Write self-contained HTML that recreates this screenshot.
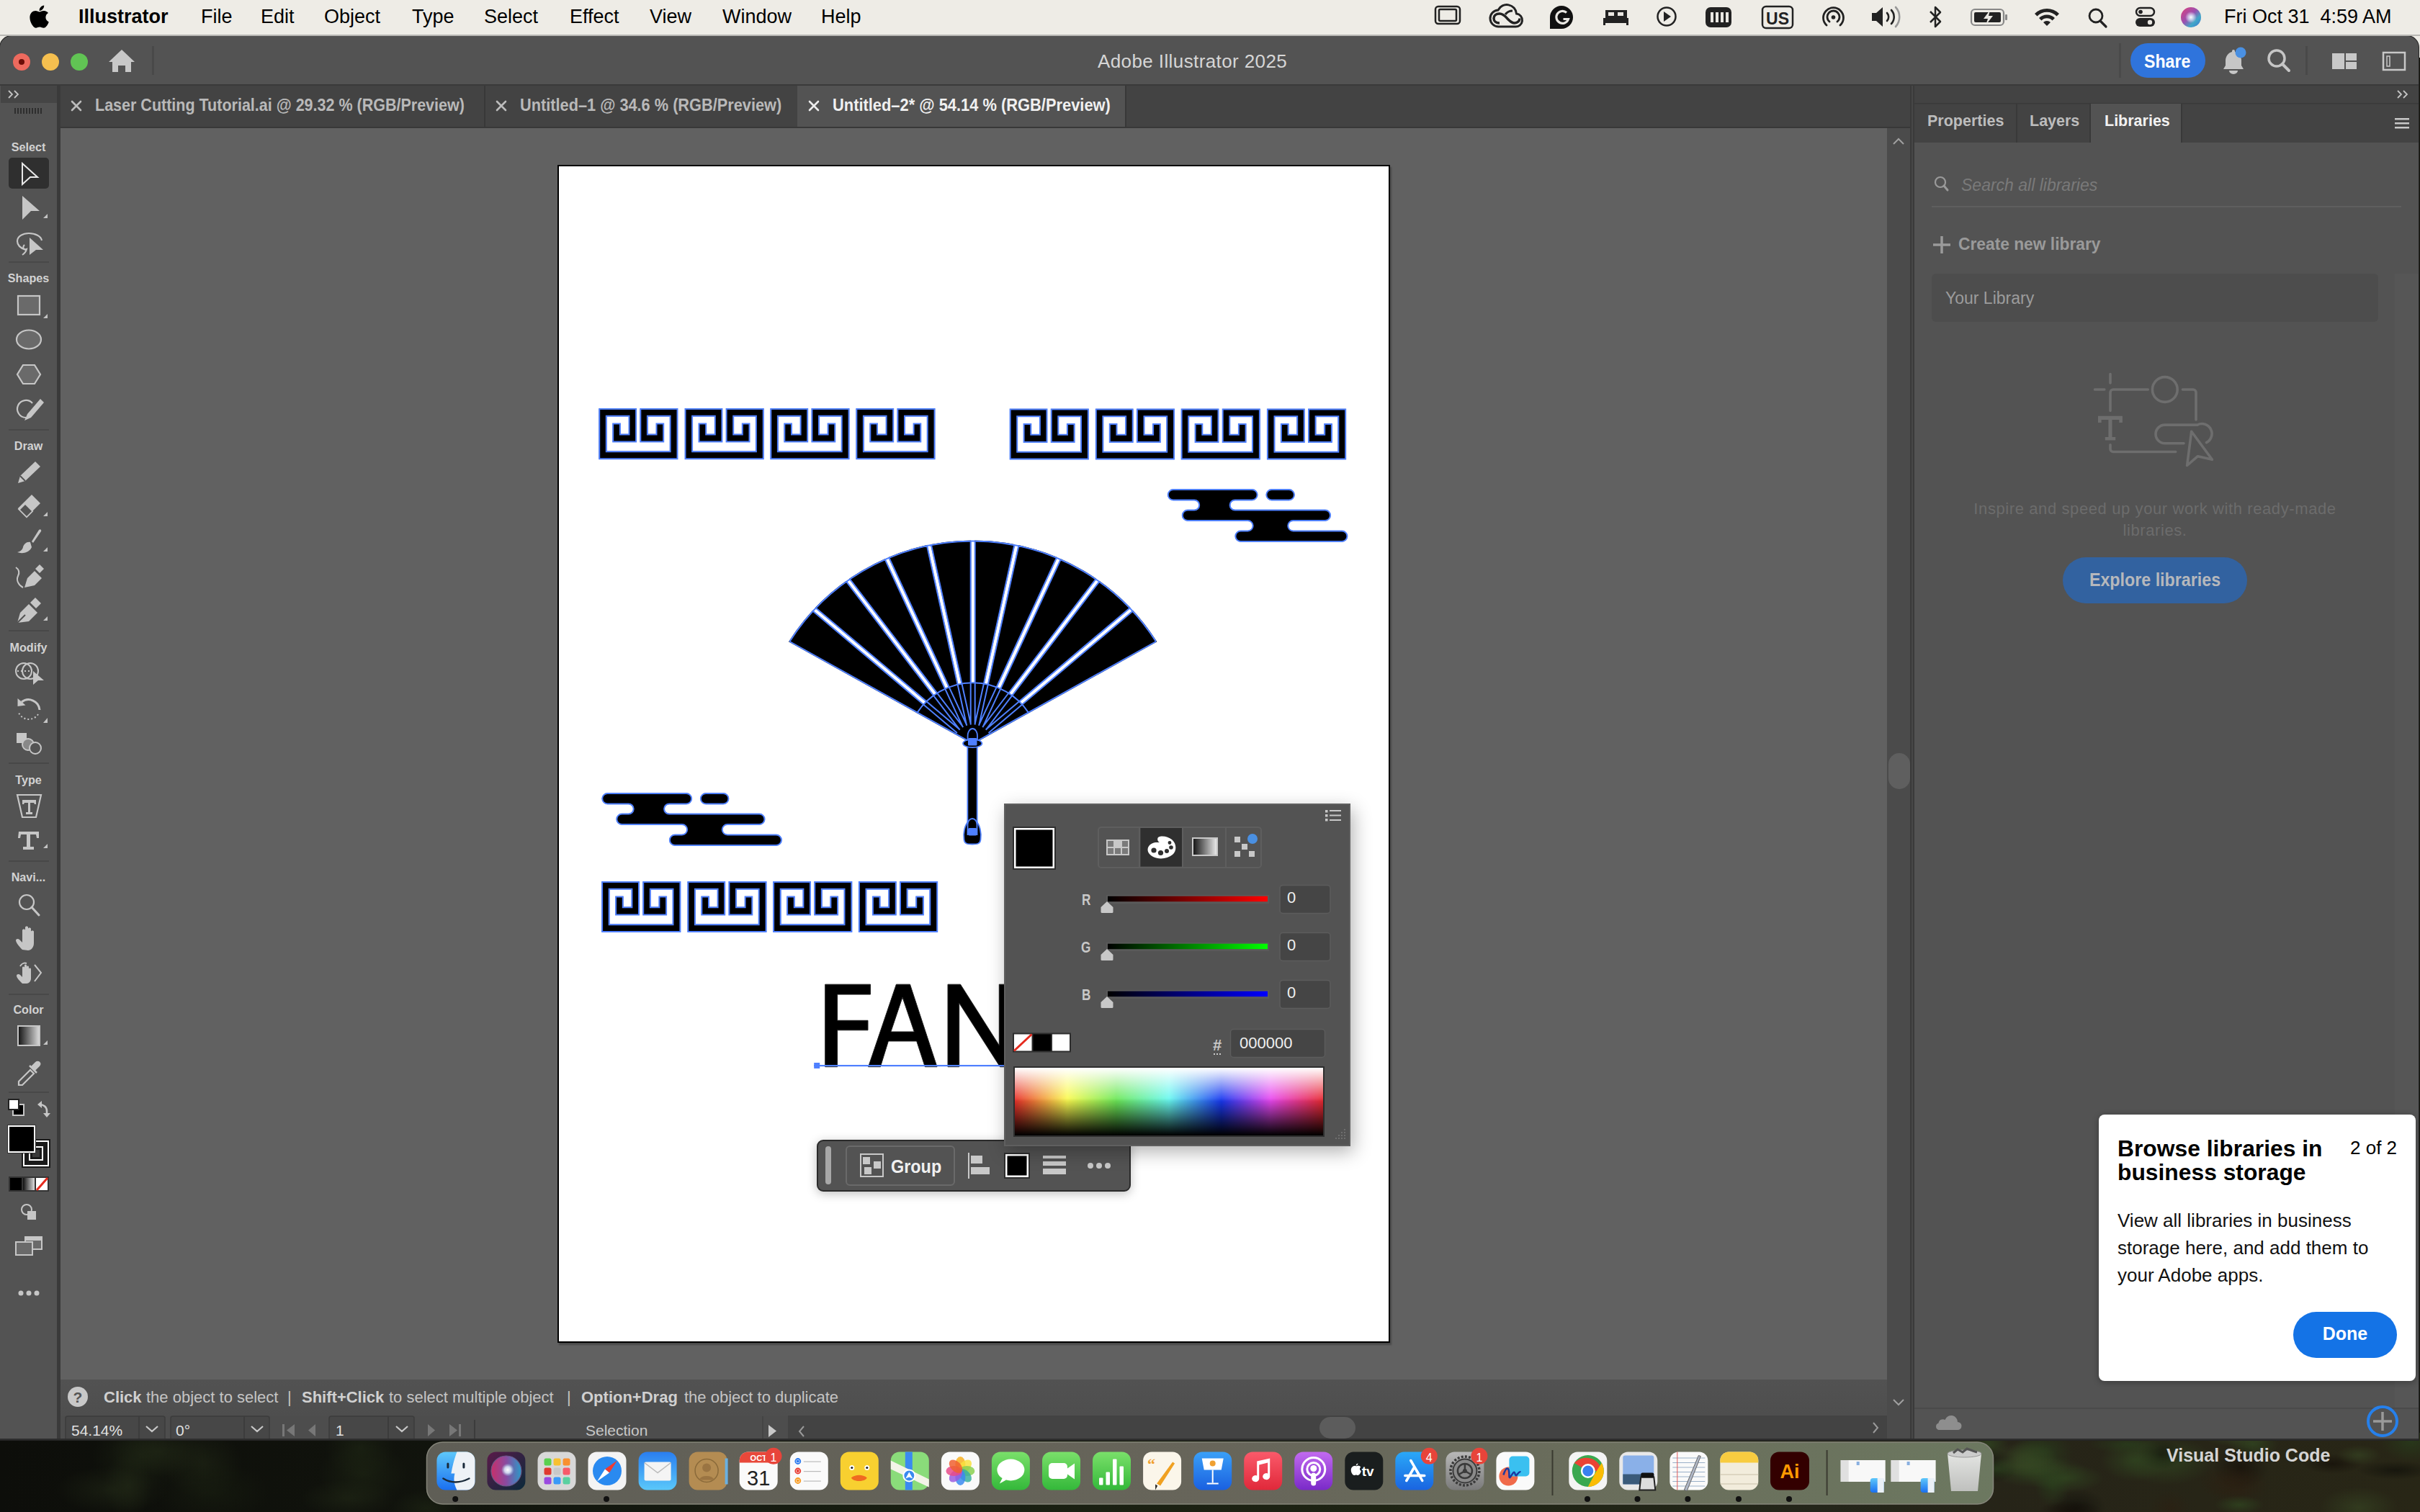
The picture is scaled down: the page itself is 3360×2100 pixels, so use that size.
<!DOCTYPE html>
<html><head><meta charset="utf-8">
<style>
*{margin:0;padding:0;box-sizing:border-box}
html,body{width:3360px;height:2100px;overflow:hidden}
body{position:relative;font-family:"Liberation Sans",sans-serif;background:#15160f}
.a{position:absolute}
.t{position:absolute;white-space:nowrap;line-height:1}
svg{position:absolute;overflow:visible}
#wall{left:0;top:1990px;width:3360px;height:110px;background:radial-gradient(ellipse 54px 13px at 2954px 16px,rgba(40,62,28,.7),transparent),radial-gradient(ellipse 34px 13px at 3109px 100px,rgba(48,70,32,.75),transparent),radial-gradient(ellipse 62px 14px at 2814px 46px,rgba(56,72,36,.6),transparent),radial-gradient(ellipse 51px 13px at 3109px 6px,rgba(56,72,36,.6),transparent),radial-gradient(ellipse 31px 14px at 3275px 31px,rgba(56,72,36,.6),transparent),radial-gradient(ellipse 53px 20px at 2868px 63px,rgba(48,70,32,.75),transparent),radial-gradient(ellipse 47px 24px at 3098px 68px,rgba(44,32,18,.65),transparent),radial-gradient(ellipse 38px 30px at 3111px 49px,rgba(20,14,8,.7),transparent),radial-gradient(ellipse 47px 19px at 2809px 33px,rgba(56,72,36,.6),transparent),radial-gradient(ellipse 43px 29px at 3348px 12px,rgba(40,62,28,.7),transparent),radial-gradient(ellipse 28px 24px at 3013px 105px,rgba(44,32,18,.65),transparent),radial-gradient(ellipse 47px 30px at 2964px 38px,rgba(48,70,32,.75),transparent),radial-gradient(ellipse 54px 13px at 3326px 52px,rgba(12,12,8,.6),transparent),radial-gradient(ellipse 45px 28px at 3106px 74px,rgba(44,32,18,.65),transparent),radial-gradient(ellipse 32px 14px at 2773px 50px,rgba(40,62,28,.7),transparent),radial-gradient(ellipse 42px 32px at 2837px 27px,rgba(40,62,28,.7),transparent),radial-gradient(ellipse 31px 21px at 3000px 30px,rgba(12,12,8,.6),transparent),radial-gradient(ellipse 64px 34px at 3009px 39px,rgba(48,70,32,.75),transparent),radial-gradient(ellipse 25px 31px at 2850px 72px,rgba(40,62,28,.7),transparent),radial-gradient(ellipse 41px 25px at 2762px 46px,rgba(12,12,8,.6),transparent),radial-gradient(ellipse 54px 29px at 3275px 104px,rgba(56,72,36,.6),transparent),radial-gradient(ellipse 42px 14px at 3238px 43px,rgba(20,14,8,.7),transparent),radial-gradient(ellipse 44px 14px at 2874px 108px,rgba(20,14,8,.7),transparent),radial-gradient(ellipse 29px 20px at 2760px 16px,rgba(48,70,32,.75),transparent),radial-gradient(ellipse 36px 19px at 3128px 16px,rgba(48,70,32,.75),transparent),radial-gradient(ellipse 69px 23px at 2829px 53px,rgba(48,70,32,.75),transparent),radial-gradient(ellipse 36px 31px at 2821px 37px,rgba(48,70,32,.75),transparent),radial-gradient(ellipse 41px 27px at 2883px 104px,rgba(12,12,8,.6),transparent),radial-gradient(ellipse 34px 45px at 178px 74px,rgba(36,44,24,.5),transparent),radial-gradient(ellipse 68px 35px at 220px 26px,rgba(36,44,24,.5),transparent),radial-gradient(ellipse 70px 49px at 197px 32px,rgba(30,38,20,.6),transparent),radial-gradient(ellipse 66px 26px at 483px 91px,rgba(36,44,24,.5),transparent),radial-gradient(ellipse 79px 43px at 295px 83px,rgba(24,30,16,.6),transparent),radial-gradient(ellipse 77px 33px at 155px 79px,rgba(36,44,24,.5),transparent),radial-gradient(ellipse 48px 26px at 592px 105px,rgba(30,38,20,.6),transparent),radial-gradient(ellipse 54px 49px at 282px 43px,rgba(36,44,24,.5),transparent),radial-gradient(ellipse 62px 43px at 504px 57px,rgba(30,38,20,.6),transparent),radial-gradient(ellipse 49px 41px at 500px 21px,rgba(30,38,20,.6),transparent),linear-gradient(90deg,#0d0e0a 0%,#10120c 15%,#151a10 30%,#1a2012 45%,#1f2414 60%,#24261a 75%,#262418 82%,#282616 100%)}
#menubar{left:0;top:0;width:3360px;height:80px;background:#EEECE6}
.mi{font-size:27px;color:#000;top:12px}
#win{left:0;top:50px;width:3358px;height:1950px;background:#535353;border-radius:16px 16px 0 0;box-shadow:0 0 0 1px #242424}
.tab{top:118px;height:59px;background:#434343;border-right:2px solid #393939}
.tabt{font-size:24px;font-weight:bold;color:#b9b9b9;top:137px}
.lbl{font-size:21px;font-weight:bold;color:#d2d2d2;left:0;width:79px;text-align:center}
.sep{left:12px;width:56px;height:2px;background:#484848}
</style></head>
<body>
<div id="wall" class="a"></div>
<div id="menubar" class="a"></div>
<div id="win" class="a"></div>

<!-- MENUBAR CONTENT -->
<div class="a" style="left:0;top:48px;width:3360px;height:2px;background:#b9b8b4"></div>
<svg style="left:0;top:0" width="80" height="50"><path fill="#000" transform="translate(41.1 5.2) scale(0.0701)" d="M318.7 268.7c-.2-36.7 16.4-64.4 50-84.8-18.8-26.9-47.2-41.7-84.7-44.6-35.5-2.8-74.3 20.7-88.5 20.7-15 0-49.4-19.7-76.4-19.7C63.3 141.2 4 184.8 4 273.5q0 39.3 14.4 81.2c12.8 36.7 59 126.7 107.2 125.2 25.2-.6 43-17.9 75.8-17.9 31.8 0 48.3 17.9 76.4 17.9 48.6-.7 90.4-82.5 102.6-119.3-65.2-30.7-61.7-90-61.7-91.9zm-56.6-164.2c27.3-32.4 24.8-61.9 24-72.5-24.1 1.4-52 16.4-67.9 34.9-17.5 19.8-27.8 44.3-25.6 71.9 26.1 2 49.9-11.4 69.5-34.3z"/></svg>
<div class="t mi" style="left:109px;top:10px;font-weight:bold">Illustrator</div>
<div class="t mi" style="left:279px;top:10px">File</div>
<div class="t mi" style="left:362px;top:10px">Edit</div>
<div class="t mi" style="left:450px;top:10px">Object</div>
<div class="t mi" style="left:572px;top:10px">Type</div>
<div class="t mi" style="left:672px;top:10px">Select</div>
<div class="t mi" style="left:791px;top:10px">Effect</div>
<div class="t mi" style="left:902px;top:10px">View</div>
<div class="t mi" style="left:1003px;top:10px">Window</div>
<div class="t mi" style="left:1140px;top:10px">Help</div>
<svg style="left:0;top:0" width="3360" height="50">
 <g fill="none" stroke="#222" stroke-width="2.5">
  <rect x="1993" y="9" width="34" height="24" rx="4"/><rect x="1998" y="13" width="24" height="16" rx="1.5"/>
 </g>
 <path d="M2081 37a11.5 11.5 0 0 1-1-23a13.5 13.5 0 0 1 25.5 5a9 9 0 0 1-2 18z" fill="none" stroke="#222" stroke-width="3"/>
 <path d="M2082 32c-5 0-8-3-8-6.5s3-6.5 8-6.5c6 0 9 5 12 8s5 5 9 5c4 0 7-3 7-6.5" fill="none" stroke="#222" stroke-width="3.5"/>
 <path d="M2090 20c3-4 6-5 10-5" fill="none" stroke="#222" stroke-width="3"/>
 <path d="M2168 8a16 16 0 1 1 0 32h-16v-16a16 16 0 0 1 16-16z" fill="#111"/>
 <path d="M2175 17.5a8.5 8.5 0 1 0 2.5 9h-7" fill="none" stroke="#e9e7e2" stroke-width="3.2"/>
 <path d="M2226 25h35v10h-3v-3h-29v3h-3z M2229 14h30v11h-30z" fill="#222"/>
 <rect x="2233" y="17" width="8" height="5" fill="#e9e7e2"/><rect x="2246" y="17" width="8" height="5" fill="#e9e7e2"/>
 <circle cx="2314" cy="23" r="12.5" fill="none" stroke="#222" stroke-width="2.5"/><path d="M2310 16l10 7-10 7z" fill="#222"/>
 <rect x="2368" y="10" width="36" height="28" rx="7" fill="#222"/>
 <g fill="#e9e7e2"><rect x="2375" y="17" width="4" height="14"/><rect x="2382" y="17" width="4" height="14"/><rect x="2389" y="17" width="4" height="14"/><rect x="2396" y="17" width="4" height="14"/></g>
 <rect x="2447" y="9" width="42" height="30" rx="5" fill="none" stroke="#222" stroke-width="2.5"/>
 <text x="2468" y="33.5" font-family="Liberation Sans" font-weight="bold" font-size="23" text-anchor="middle" fill="#222">US</text>
 <g fill="none" stroke="#222" stroke-width="2.8" stroke-linecap="round">
  <path d="M2536 35a14 14 0 1 1 19 0"/><path d="M2540 30a8.5 8.5 0 1 1 11 0"/>
 </g><circle cx="2545.5" cy="24" r="2.8" fill="#222"/>
 <path d="M2599 18h6l9-8v27l-9-8h-6z" fill="#222"/>
 <g fill="none" stroke-width="2.6" stroke-linecap="round"><path d="M2620 18a8 8 0 0 1 0 11" stroke="#222"/><path d="M2626 14a14 14 0 0 1 0 19" stroke="#222"/><path d="M2632 10a20 20 0 0 1 0 27" stroke="#999"/></g>
 <path d="M2680 16l14 14-7 7V10l7 7-14 14" fill="none" stroke="#222" stroke-width="2.5" stroke-linejoin="round"/>
 <rect x="2737" y="13" width="45" height="22" rx="5" fill="none" stroke="#888" stroke-width="2.2"/>
 <rect x="2741" y="17" width="37" height="14" rx="2" fill="#222"/><rect x="2784" y="20" width="3" height="8" rx="1" fill="#888"/>
 <path d="M2763 14l-9 12h6l-3 9 10-13h-6z" fill="#e9e7e2"/>
 <g fill="#222"><path d="M2825 19a24 24 0 0 1 34 0l-3.5 3.5a19 19 0 0 0-27 0z"/><path d="M2831 25a15.5 15.5 0 0 1 22 0l-3.5 3.5a10.5 10.5 0 0 0-15 0z"/><path d="M2837 31a7 7 0 0 1 10 0l-5 5z"/></g>
 <circle cx="2910" cy="22" r="9" fill="none" stroke="#222" stroke-width="2.8"/><path d="M2916 29l8 8" stroke="#222" stroke-width="3.2" stroke-linecap="round"/>
 <rect x="2966" y="11" width="25" height="11" rx="5.5" fill="none" stroke="#222" stroke-width="2.5"/><circle cx="2972" cy="16.5" r="2.8" fill="#222"/>
 <rect x="2965" y="25" width="27" height="12" rx="6" fill="#222"/><circle cx="2985" cy="31" r="3.2" fill="#e9e7e2"/>
 <defs><linearGradient id="siriL" x1="0" y1="0" x2="1" y2="1"><stop offset="0" stop-color="#e0407a"/><stop offset=".45" stop-color="#9a50b0"/><stop offset=".7" stop-color="#40a8c8"/><stop offset="1" stop-color="#3a70d0"/></linearGradient><radialGradient id="siriC" cx="50%" cy="50%" r="50%"><stop offset="0" stop-color="#fff"/><stop offset=".4" stop-color="#e8f8ff" stop-opacity=".7"/><stop offset="1" stop-color="#fff" stop-opacity="0"/></radialGradient></defs>
 <circle cx="3042" cy="24" r="14" fill="url(#siriL)"/><circle cx="3042" cy="24" r="8" fill="url(#siriC)"/>
</svg>
<div class="t mi" style="left:3088px;top:10px">Fri Oct 31&nbsp; 4:59 AM</div>

<!-- title bar -->
<div class="a" style="left:0;top:117px;width:3358px;height:2px;background:#3a3a3a"></div>
<!-- left column header and toolbar -->
<div class="a" style="left:1px;top:119px;width:78px;height:24px;background:#454545"></div>
<div class="a" style="left:79px;top:119px;width:5px;height:1879px;background:#3a3a3a"></div>
<!-- tabs row -->
<div class="a" style="left:84px;top:119px;width:2568px;height:58px;background:#434343"></div>
<!-- canvas -->
<div class="a" style="left:84px;top:177px;width:2536px;height:1739px;background:#616161"></div>
<div class="a" style="left:84px;top:176px;width:2568px;height:2px;background:#383838"></div>
<!-- v scrollbar -->
<div class="a" style="left:2620px;top:178px;width:32px;height:1820px;background:#4b4b4b"></div>
<div class="a" style="left:2622px;top:1046px;width:30px;height:50px;border-radius:15px;background:#5f5f5f"></div>
<div class="a" style="left:2652px;top:119px;width:6px;height:1879px;background:#3a3a3a"></div><div class="a" style="left:2654px;top:119px;width:2px;height:1879px;background:#474747"></div>
<!-- status rows -->
<div class="a" style="left:84px;top:1916px;width:2536px;height:50px;background:linear-gradient(#525252,#4e4e4e)"></div>
<div class="a" style="left:84px;top:1966px;width:1010px;height:32px;background:#4d4d4d"></div><div class="a" style="left:1094px;top:1966px;width:1526px;height:32px;background:#434343"></div><div class="a" style="left:0;top:1998px;width:3358px;height:2px;background:#2e2e2e"></div>
<div class="a" style="left:1832px;top:1968px;width:50px;height:30px;border-radius:15px;background:#5c5c5c"></div>
<!-- right panel -->
<div class="a" style="left:2658px;top:119px;width:700px;height:24px;background:#434343"></div>
<div class="a" style="left:2658px;top:143px;width:700px;height:55px;background:#434343"></div>
<div class="a" style="left:2658px;top:1955px;width:700px;height:2px;background:#4a4a4a"></div>

<!-- TITLEBAR CONTENT -->
<svg style="left:0;top:50px" width="3358" height="68">
 <circle cx="30" cy="36" r="12" fill="#ED6A5E"/><circle cx="30" cy="36" r="4" fill="#6b0d07"/>
 <circle cx="70" cy="36" r="12" fill="#F5BF4F"/>
 <circle cx="110" cy="36" r="12" fill="#61C454"/>
 <path d="M151 36L169 19L187 36H182V50H174V41H164V50H156V36Z" fill="#c8c8c8"/>
 <rect x="211" y="14" width="3" height="40" fill="#494949"/>
 <rect x="2942" y="10" width="3" height="48" fill="#4a4a4a"/>
 <rect x="2958" y="10" width="104" height="48" rx="24" fill="#2F74DC"/>
 <g fill="#c6c6c6">
  <path d="M3099 21a2 2 0 0 1 4 0v1c6 1.5 9 7 9 12v7l3 5h-28l3-5v-7c0-5 3-10.5 9-12z"/>
  <path d="M3095 48h12a6 5 0 0 1-12 0z"/>
 </g>
 <circle cx="3111" cy="23" r="7.5" fill="#4a90e2"/>
 <circle cx="3161" cy="31" r="11" fill="none" stroke="#c6c6c6" stroke-width="3.5"/>
 <path d="M3169 39l9 9" stroke="#c6c6c6" stroke-width="4" stroke-linecap="round"/>
 <rect x="3201" y="14" width="3" height="40" fill="#494949"/>
 <rect x="3238" y="24" width="17" height="22" fill="#c8c8c8"/><rect x="3257" y="24" width="15" height="10" fill="#c8c8c8"/><rect x="3257" y="36" width="15" height="10" fill="#c8c8c8"/>
 <rect x="3309" y="23" width="30" height="24" fill="none" stroke="#c8c8c8" stroke-width="2.5"/>
 <rect x="3314" y="28" width="4" height="14" fill="none" stroke="#c8c8c8" stroke-width="1.5"/>
</svg>
<div class="t" style="left:1524px;top:72px;font-size:26px;letter-spacing:.4px;color:#d6d6d6">Adobe Illustrator 2025</div>
<div class="t" style="left:2977px;top:72px;font-size:26px;font-weight:bold;color:#fff;transform:scaleX(.89);transform-origin:left">Share</div>

<!-- TABS -->
<div class="a" style="left:672px;top:119px;width:2px;height:57px;background:#383838"></div>
<div class="a" style="left:1107px;top:119px;width:455px;height:57px;background:#535353"></div>
<div class="a" style="left:1562px;top:119px;width:2px;height:57px;background:#383838"></div>
<svg style="left:0;top:118px" width="1600" height="60">
 <g stroke-width="2.6" stroke-linecap="round">
  <path d="M100 23l12 12M112 23l-12 12" stroke="#bcbcbc"/>
  <path d="M690 23l12 12M702 23l-12 12" stroke="#bcbcbc"/>
  <path d="M1124 23l12 12M1136 23l-12 12" stroke="#ececec"/>
 </g>
</svg>
<div class="t tabt" style="left:132px;top:134px;transform:scaleX(.896);transform-origin:left">Laser Cutting Tutorial.ai @ 29.32 % (RGB/Preview)</div>
<div class="t tabt" style="left:722px;top:134px;transform:scaleX(.906);transform-origin:left">Untitled&#8211;1 @ 34.6 % (RGB/Preview)</div>
<div class="t tabt" style="left:1156px;top:134px;color:#f0f0f0;transform:scaleX(.911);transform-origin:left">Untitled&#8211;2* @ 54.14 % (RGB/Preview)</div>

<!-- RIGHT PANEL HEADER -->
<svg style="left:2658px;top:118px" width="700" height="80">
 <path d="M671 8l5 5-5 5M679 8l5 5-5 5" fill="none" stroke="#c4c4c4" stroke-width="1.8"/>
 <rect x="0" y="25" width="700" height="1.5" fill="#3a3a3a"/>
 <rect x="141" y="26" width="2" height="54" fill="#393939"/>
 <rect x="245" y="26" width="125" height="54" fill="#535353"/>
 <rect x="243" y="26" width="2" height="54" fill="#393939"/>
 <rect x="370" y="26" width="2" height="54" fill="#393939"/>
 <g fill="#c8c8c8"><rect x="667" y="46" width="20" height="2.5"/><rect x="667" y="52" width="20" height="2.5"/><rect x="667" y="58" width="20" height="2.5"/></g>
</svg>
<div class="t" style="left:2676px;top:158px;font-size:21.5px;font-weight:bold;color:#bdbdbd">Properties</div>
<div class="t" style="left:2818px;top:158px;font-size:21.5px;font-weight:bold;color:#bdbdbd">Layers</div>
<div class="t" style="left:2922px;top:158px;font-size:21.5px;font-weight:bold;color:#f2f2f2">Libraries</div>

<!-- LEFT TOOLBAR -->
<svg style="left:0;top:118px" width="80" height="50">
 <path d="M12 8l5 5-5 5M20 8l5 5-5 5" fill="none" stroke="#c4c4c4" stroke-width="1.8"/>
 <g fill="#2e2e2e"><rect x="20" y="32" width="2" height="8"/><rect x="24" y="32" width="2" height="8"/><rect x="28" y="32" width="2" height="8"/><rect x="32" y="32" width="2" height="8"/><rect x="36" y="32" width="2" height="8"/><rect x="40" y="32" width="2" height="8"/><rect x="44" y="32" width="2" height="8"/><rect x="48" y="32" width="2" height="8"/><rect x="52" y="32" width="2" height="8"/><rect x="56" y="32" width="2" height="8"/></g>
</svg>


<!-- TOOLBAR ICONS -->
<div class="a" style="left:12px;top:219px;width:56px;height:43px;border-radius:5px;background:#2f2f2f"></div>
<div class="t lbl" style="top:196px;font-size:17px;transform:scaleX(.95)">Select</div>
<div class="t lbl" style="top:378px;font-size:17px;transform:scaleX(.95)">Shapes</div>
<div class="t lbl" style="top:611px;font-size:17px;transform:scaleX(.95)">Draw</div>
<div class="t lbl" style="top:891px;font-size:17px;transform:scaleX(.95)">Modify</div>
<div class="t lbl" style="top:1075px;font-size:17px;transform:scaleX(.95)">Type</div>
<div class="t lbl" style="top:1210px;font-size:17px;transform:scaleX(.95)">Navi...</div>
<div class="t lbl" style="top:1394px;font-size:17px;transform:scaleX(.95)">Color</div>
<svg style="left:0;top:0" width="80" height="1900">
 <g fill="#484848"><rect x="12" y="363" width="56" height="2"/><rect x="12" y="596" width="56" height="2"/><rect x="12" y="875" width="56" height="2"/><rect x="12" y="1059" width="56" height="2"/><rect x="12" y="1195" width="56" height="2"/><rect x="12" y="1380" width="56" height="2"/><rect x="12" y="1516" width="56" height="2"/></g>
 <g fill="#c4c4c4">
  <path d="M60 303l6-6v6z M60 442l6-6v6z M60 717l6-6v6z M60 766l6-6v6z M60 862l6-6v6z M60 1004l6-7v7z M60 1178l6-6v6z M60 1451l6-6v6z"/>
 </g>
 <!-- select -->
 <path d="M31 227L52 246H42L31 256Z" fill="none" stroke="#e8e8e8" stroke-width="2"/>
 <!-- direct select -->
 <path d="M31 272L55 293H43L31 305Z" fill="#c6c6c6"/>
 <!-- lasso -->
 <path d="M36 347c-8-2-12-7-12-12 0-7 8-11 16-11 9 0 17 4 18 10" fill="none" stroke="#c6c6c6" stroke-width="2.2"/>
 <path d="M34 340c-3 3-2 8 3 6-1 4-3 6-6 8" fill="none" stroke="#c6c6c6" stroke-width="2"/>
 <path d="M41 330L60 347H50L41 354Z" fill="#c6c6c6"/>
 <!-- rect -->
 <rect x="25" y="411" width="30" height="26" fill="#6a6a6a" stroke="#c6c6c6" stroke-width="2.2"/>
 <ellipse cx="40" cy="471.5" rx="17" ry="13" fill="#6a6a6a" stroke="#c6c6c6" stroke-width="2.2"/>
 <path d="M32 507h16l8 13-8 13h-16l-8-13z" fill="#6a6a6a" stroke="#c6c6c6" stroke-width="2.2"/>
 <!-- shaper -->
 <path d="M36 580a12 12 0 1 1 9-20" fill="none" stroke="#c6c6c6" stroke-width="2.2"/>
 <path d="M34 584l4-9 18-21 5 5-18 21z" fill="#c6c6c6"/>
 <!-- pencil -->
 <path d="M25 671l3-10 21-20 7 7-21 20z" fill="#c6c6c6"/><path d="M28 661l7 7" stroke="#535353" stroke-width="2"/>
 <!-- eraser -->
 <path d="M25 706l19-19 12 12-19 19z" fill="#c6c6c6"/><path d="M26 707l8-8 11 11-8 8z" fill="none" stroke="#c6c6c6" stroke-width="2"/><path d="M28 708l7-7 9 9-7 7z" fill="#535353"/>
 <!-- brush -->
 <path d="M44 752l10-16c2-2 4 0 3 2l-11 16z" fill="#c6c6c6"/><path d="M42 753c-5-1-9 3-10 7-1 4-4 6-8 7 8 3 17 0 20-7z" fill="#c6c6c6"/>
 <!-- curvature pen -->
 <path d="M32 816c-6-3-10-10-7-16 3-6 0-10-3-12" fill="none" stroke="#c6c6c6" stroke-width="2"/>
 <path d="M34 816l4-13 10-10 10 10-10 10z" fill="#c6c6c6"/><path d="M49 790l6-6 6 6-6 6z" fill="#c6c6c6"/>
 <!-- pen -->
 <path d="M24 865l4-14 12-12 12 12-12 12z" fill="#c6c6c6"/><path d="M42 837l7-7 8 8-7 7z" fill="#c6c6c6"/><path d="M24 865l11-11" stroke="#535353" stroke-width="2"/>
 <!-- shape builder -->
 <circle cx="33" cy="932" r="11" fill="none" stroke="#c6c6c6" stroke-width="2"/><circle cx="42" cy="932" r="11" fill="none" stroke="#c6c6c6" stroke-width="2"/>
 <path d="M24 932h18" stroke="#c6c6c6" stroke-width="2" stroke-dasharray="2 3"/>
 <path d="M46 932L61 945H53L46 951Z" fill="#c6c6c6"/>
 <!-- rotate -->
 <path d="M30 975a15.5 15.5 0 0 1 25 11" fill="none" stroke="#c6c6c6" stroke-width="3"/>
 <path d="M53 992a15.5 15.5 0 0 1-27 -2" fill="none" stroke="#c6c6c6" stroke-width="2" stroke-dasharray="2 3"/>
 <path d="M24.5 970l0 11 11-1.5z" fill="#c6c6c6"/>
 <!-- blend -->
 <rect x="23" y="1018" width="14" height="14" fill="#c6c6c6"/><circle cx="39" cy="1034" r="8" fill="#888" stroke="#c6c6c6" stroke-width="2"/><circle cx="49" cy="1039" r="8" fill="#535353" stroke="#c6c6c6" stroke-width="2"/>
 <!-- type touch -->
 <path d="M24 1104h33l-7 31h-19z" fill="none" stroke="#c6c6c6" stroke-width="2.2"/>
 <path d="M31 1111h19v6h-2l-1-2h-5v13h3v3h-9v-3h3v-13h-5l-1 2h-2z" fill="#c6c6c6"/>
 <!-- type -->
 <path d="M26 1155h28v9h-3l-1-5h-8v17h5v4h-15v-4h5v-17h-8l-1 5h-3z" fill="#c6c6c6"/>
 <!-- zoom -->
 <circle cx="37" cy="1253" r="10" fill="none" stroke="#c6c6c6" stroke-width="2.2"/><path d="M44 1260l10 11" stroke="#c6c6c6" stroke-width="3" stroke-linecap="round"/>
 <!-- hand -->
 <path d="M31 1319c-4-4-9-10-9-13 0-2 3-3 5-1l4 4v-17c0-2 4-2 4 0v11v-15c0-2 4-2 4 0v15v-13c0-2 4-2 4 0v13v-9c0-2 4-2 4 0v16c0 6-4 10-8 10z" fill="#c6c6c6"/>
 <!-- rotate view -->
 <path d="M31 1366c-4-4-8-8-8-11 0-2 3-3 5-1l3 3v-13c0-2 3-2 3 0v8v-11c0-2 3-2 3 0v11v-9c0-2 3-2 3 0v9v-6c0-2 3-2 3 0v13c0 4-3 7-6 7z" fill="#c6c6c6"/>
 <path d="M48 1340l9 11-9 12" fill="none" stroke="#c6c6c6" stroke-width="2"/><path d="M28 1342c2-4 6-5 9-4" fill="none" stroke="#c6c6c6" stroke-width="2"/>
 <!-- gradient -->
 <defs><linearGradient id="tg" x1="0" x2="1"><stop offset="0" stop-color="#111"/><stop offset="1" stop-color="#ddd"/></linearGradient></defs>
 <rect x="25" y="1425" width="30" height="27" fill="url(#tg)" stroke="#c6c6c6" stroke-width="2"/>
 <!-- eyedropper -->
 <path d="M26 1502l16-16 5 5-16 16h-5z" fill="none" stroke="#c6c6c6" stroke-width="2.2"/><path d="M44 1482l6-6c3-3 7 1 4 4l-6 6z M41 1480l10 10" fill="#c6c6c6" stroke="#c6c6c6" stroke-width="2.5"/>
 <!-- default / swap -->
 <rect x="18" y="1534" width="15" height="15" fill="#000" stroke="#c6c6c6" stroke-width="2"/>
 <rect x="12" y="1527" width="14" height="14" fill="#fff" stroke="#222" stroke-width="2"/>
 <path d="M55 1534c5 0 10 3 10 9v5" fill="none" stroke="#c6c6c6" stroke-width="2.6"/><path d="M52 1534l6-5v10z M60 1546l10 0-5 6z" fill="#c6c6c6"/>
 <!-- fill / stroke -->
 <rect x="30" y="1582" width="40" height="40" fill="#1a1a1a"/>
 <rect x="33" y="1585" width="34" height="34" fill="none" stroke="#fff" stroke-width="2"/>
 <rect x="41" y="1593" width="18" height="18" fill="none" stroke="#fff" stroke-width="2"/>
 <rect x="45" y="1597" width="10" height="10" fill="#3a3a3a"/>
 <rect x="10" y="1562" width="40" height="40" fill="#333"/>
 <rect x="12" y="1564" width="36" height="36" fill="#000" stroke="#fff" stroke-width="2"/>
 <!-- color mode -->
 <rect x="12" y="1634" width="56" height="21" fill="#333"/>
 <rect x="14" y="1636" width="16" height="17" fill="#000"/>
 <rect x="32" y="1636" width="16" height="17" fill="url(#tg)"/>
 <rect x="50" y="1636" width="16" height="17" fill="#fff"/><path d="M51 1653l15-17" stroke="#e52a1e" stroke-width="3"/>
 <!-- draw mode -->
 <circle cx="37" cy="1680" r="7" fill="none" stroke="#c6c6c6" stroke-width="2"/><rect x="38" y="1682" width="12" height="12" fill="#c6c6c6"/>
 <!-- screen mode -->
 <rect x="35" y="1718" width="23" height="17" fill="#6a6a6a" stroke="#c6c6c6" stroke-width="2"/>
 <rect x="22" y="1725" width="23" height="18" fill="#6a6a6a" stroke="#c6c6c6" stroke-width="2"/>
 <rect x="35" y="1718" width="23" height="5" fill="#c6c6c6"/>
 <!-- more -->
 <circle cx="29" cy="1796" r="3.5" fill="#c6c6c6"/><circle cx="40" cy="1796" r="3.5" fill="#c6c6c6"/><circle cx="51" cy="1796" r="3.5" fill="#c6c6c6"/>
</svg>


<!-- STATUS BAR -->
<svg style="left:0;top:1900px;overflow:hidden" width="2660" height="98">
 <circle cx="108" cy="40" r="14" fill="#c8c8c8"/>
 <text x="108" y="48" font-family="Liberation Sans" font-weight="bold" font-size="21" fill="#555" text-anchor="middle">?</text>
 <g fill="#474747" stroke="#3c3c3c" stroke-width="1.5">
  <rect x="91" y="67" width="138" height="40" rx="3"/><rect x="237" y="67" width="137" height="40" rx="3"/><rect x="457" y="67" width="118" height="40" rx="3"/>
 </g>
 <g fill="#3c3c3c"><rect x="192" y="67" width="2" height="33"/><rect x="338" y="67" width="2" height="33"/><rect x="538" y="67" width="2" height="33"/><rect x="658" y="72" width="2" height="28"/></g>
 <g fill="none" stroke="#c8c8c8" stroke-width="2.2"><path d="M203 81l8 7 8-7M349 81l8 7 8-7M550 81l8 7 8-7"/></g>
 <g fill="#777"><rect x="392" y="78" width="3" height="17"/><path d="M409 78v17l-11-8.5z M438 78v17l-10-8.5z M594 78v17l10-8.5z M624 78v17l11-8.5z"/><rect x="637" y="78" width="3" height="17"/></g>
 <path d="M1067 79v17l11-8.5z" fill="#c8c8c8"/>
 <rect x="1058" y="67" width="2" height="31" fill="#444"/>
 <path d="M1116 81l-6 7 6 7M2601 76l6 7-6 7" fill="none" stroke="#9a9a9a" stroke-width="2"/>
 <path d="M2630 46l7 7 7-7M2630 93l7-7 7 7" fill="none" stroke="#9a9a9a" stroke-width="0"/>
</svg>
<svg style="left:2620px;top:177px" width="32" height="1790">
 <path d="M9 23l7-7 7 7M9 1767l7 7 7-7" fill="none" stroke="#a0a0a0" stroke-width="2"/>
</svg>
<div class="t" style="left:144px;top:1930px;font-size:22px;font-weight:bold;color:#d0d0d0">Click</div>
<div class="t" style="left:203px;top:1930px;font-size:22px;color:#c4c4c4">the object to select</div>
<div class="t" style="left:399px;top:1930px;font-size:22px;color:#c4c4c4">|</div>
<div class="t" style="left:419px;top:1930px;font-size:22px;font-weight:bold;color:#d0d0d0">Shift+Click</div>
<div class="t" style="left:540px;top:1930px;font-size:22px;color:#c4c4c4">to select multiple object</div>
<div class="t" style="left:787px;top:1930px;font-size:22px;color:#c4c4c4">|</div>
<div class="t" style="left:807px;top:1930px;font-size:22px;font-weight:bold;color:#d0d0d0">Option+Drag</div>
<div class="t" style="left:950px;top:1930px;font-size:22px;color:#c4c4c4">the object to duplicate</div>
<div class="t" style="left:99px;top:1976px;font-size:21px;color:#e0e0e0">54.14%</div>
<div class="t" style="left:244px;top:1976px;font-size:21px;color:#e0e0e0">0&#176;</div>
<div class="t" style="left:466px;top:1976px;font-size:21px;color:#e0e0e0">1</div>
<div class="t" style="left:813px;top:1976px;font-size:21px;color:#c8c8c8">Selection</div>

<!-- RIGHT PANEL CONTENT -->
<svg style="left:2658px;top:198px" width="700" height="1800">
 <circle cx="36" cy="55" r="7" fill="none" stroke="#9a9a9a" stroke-width="2.2"/><path d="M41 60l5 6" stroke="#9a9a9a" stroke-width="3" stroke-linecap="round"/>
 <rect x="24" y="88" width="652" height="2" fill="#5e5e5e"/>
 <path d="M26 142h24M38 130v24" stroke="#9a9a9a" stroke-width="3.5"/>
 <rect x="24" y="182" width="620" height="67" rx="6" fill="#4d4d4d"/>
 <rect x="667" y="182" width="33" height="1575" fill="#565656"/>
 <rect x="206" y="576" width="256" height="64" rx="32" fill="#3262a0"/>
 <path d="M38 1788H60a5.5 5.5 0 0 0 0-11a9 9 0 0 0-17.5-3a6 6 0 0 0-9 4.5a5 5 0 0 0 0 9.5z" fill="#8e8e8e"/>
 <circle cx="650" cy="1776" r="20" fill="none" stroke="#2680eb" stroke-width="4"/>
 <path d="M650 1763v26M637 1776h26" stroke="#9a9a9a" stroke-width="3.5"/>
</svg>

<svg style="left:0;top:0" width="3360" height="700">
 <g fill="none" stroke="#6e6e6e" stroke-width="3.6" stroke-linecap="round" stroke-linejoin="round">
  <path d="M2930 519.5V532M2908.5 541H2921.8M2930 570.5V545a4 4 0 0 1 4-4H2982.3"/>
  <circle cx="3005.8" cy="541" r="17.4"/>
  <path d="M3030.4 541H3045a4 4 0 0 1 4 4V582.9"/>
  <path d="M2930 617.8V623.5a4 4 0 0 0 4 4H3020.7"/>
  <path d="M3032 615.7H3005.8a12.8 12.8 0 0 1 0-25.6H3051a12.8 12.8 0 0 1 12.5 24.5"/>
  <path d="M3042.7 599.3L3036.6 646.5L3051.5 633.7L3071.4 638.3Z" fill="#535353"/>
 </g>
 <path d="M2913 577.8H2946.9V587H2942.3V582.9H2932.5V607H2937.2V611.6H2922.8V607H2927.4V582.9H2917.6V587H2913Z" fill="#6e6e6e"/>
</svg>
<div class="t" style="left:2723px;top:246px;font-size:23px;font-style:italic;color:#7a7a7a">Search all libraries</div>
<div class="t" style="left:2719px;top:328px;font-size:23px;font-weight:bold;color:#9a9a9a;transform:scaleX(.99);transform-origin:left">Create new library</div>
<div class="t" style="left:2701px;top:403px;font-size:23px;color:#9c9c9c">Your Library</div>
<div class="t" style="left:2658px;top:696px;width:668px;text-align:center;font-size:22px;color:#6c6c6c;letter-spacing:.6px">Inspire and speed up your work with ready-made</div>
<div class="t" style="left:2658px;top:726px;width:668px;text-align:center;font-size:22px;color:#6c6c6c;letter-spacing:.6px">libraries.</div>
<div class="t" style="left:2864px;top:793px;width:256px;text-align:center;font-size:25px;font-weight:bold;color:#b6b8bc;transform:scaleX(.93)">Explore libraries</div>

<!-- artboard -->
<div class="a" style="left:774px;top:229px;width:1156px;height:1636px;background:#fff;border:2px solid #000;box-shadow:2px 3px 2px rgba(0,0,0,.25)"></div>
<!-- ART -->
<svg style="left:0;top:0" width="3360" height="2100"><defs><path id="gk" d="M0 0H50.9V45.5H19V20.5H28.7V35.4H41.3V9.8H9.6V59.3H98.4V9.8H66.7V35.4H79.3V20.5H89V45.5H57.1V0H108.3V69.2H0Z"/>
<path id="cl" d="M19 10H128.4A7.25 7.25 0 0 1 128.4 24.5H104.6A7 7 0 0 0 104.6 38.5H229.8A7.25 7.25 0 0 1 229.8 53H185.5A7 7 0 0 0 185.5 67.5H253.2A7.25 7.25 0 0 1 253.2 82H112.6A7.25 7.25 0 0 1 112.6 67.5H122.4A7 7 0 0 0 122.4 53H39A7.25 7.25 0 0 1 39 38.5H48.2A7 7 0 0 0 48.2 24.5H19A7.25 7.25 0 0 1 19 10ZM155.6 10H179.7A7.25 7.25 0 0 1 179.7 24.5H155.6A7.25 7.25 0 0 1 155.6 10Z"/></defs>
<use href="#gk" x="832.2" y="568.0" fill="#000" stroke="#000" stroke-width="1"/>
<use href="#gk" x="832.2" y="568.0" fill="none" stroke="#4F80FF" stroke-width="2"/>
<use href="#gk" x="951.5" y="568.0" fill="#000" stroke="#000" stroke-width="1"/>
<use href="#gk" x="951.5" y="568.0" fill="none" stroke="#4F80FF" stroke-width="2"/>
<use href="#gk" x="1070.3" y="568.0" fill="#000" stroke="#000" stroke-width="1"/>
<use href="#gk" x="1070.3" y="568.0" fill="none" stroke="#4F80FF" stroke-width="2"/>
<use href="#gk" x="1189.3" y="568.0" fill="#000" stroke="#000" stroke-width="1"/>
<use href="#gk" x="1189.3" y="568.0" fill="none" stroke="#4F80FF" stroke-width="2"/>
<use href="#gk" x="1402.6" y="568.4" fill="#000" stroke="#000" stroke-width="1"/>
<use href="#gk" x="1402.6" y="568.4" fill="none" stroke="#4F80FF" stroke-width="2"/>
<use href="#gk" x="1521.8" y="568.4" fill="#000" stroke="#000" stroke-width="1"/>
<use href="#gk" x="1521.8" y="568.4" fill="none" stroke="#4F80FF" stroke-width="2"/>
<use href="#gk" x="1640.6" y="568.4" fill="#000" stroke="#000" stroke-width="1"/>
<use href="#gk" x="1640.6" y="568.4" fill="none" stroke="#4F80FF" stroke-width="2"/>
<use href="#gk" x="1759.9" y="568.4" fill="#000" stroke="#000" stroke-width="1"/>
<use href="#gk" x="1759.9" y="568.4" fill="none" stroke="#4F80FF" stroke-width="2"/>
<use href="#gk" x="836.1" y="1224.9" fill="#000" stroke="#000" stroke-width="1"/>
<use href="#gk" x="836.1" y="1224.9" fill="none" stroke="#4F80FF" stroke-width="2"/>
<use href="#gk" x="955.3" y="1224.9" fill="#000" stroke="#000" stroke-width="1"/>
<use href="#gk" x="955.3" y="1224.9" fill="none" stroke="#4F80FF" stroke-width="2"/>
<use href="#gk" x="1074.1" y="1224.9" fill="#000" stroke="#000" stroke-width="1"/>
<use href="#gk" x="1074.1" y="1224.9" fill="none" stroke="#4F80FF" stroke-width="2"/>
<use href="#gk" x="1192.9" y="1224.9" fill="#000" stroke="#000" stroke-width="1"/>
<use href="#gk" x="1192.9" y="1224.9" fill="none" stroke="#4F80FF" stroke-width="2"/>
<use href="#cl" x="1610.0" y="670.0" fill="#000" stroke="#000" stroke-width="1"/>
<use href="#cl" x="1610.0" y="670.0" fill="none" stroke="#4F80FF" stroke-width="2"/>
<use href="#cl" x="824.5" y="1092.0" fill="#000" stroke="#000" stroke-width="1"/>
<use href="#cl" x="824.5" y="1092.0" fill="none" stroke="#4F80FF" stroke-width="2"/>
<path d="M1350.7 1032.5 L1096.4 891.0 A301.5 301.5 0 0 1 1605.0 891.0 Z" fill="#000" stroke="#000" stroke-width="2"/>
<path d="M1284.3 976.4 L1129.3 845.4" stroke="#fff" stroke-width="4.8"/>
<path d="M1298.6 964.3 L1176.4 804.5" stroke="#fff" stroke-width="4.8"/>
<path d="M1314.9 955.5 L1230.8 774.2" stroke="#fff" stroke-width="4.8"/>
<path d="M1332.5 950.1 L1289.6 755.7" stroke="#fff" stroke-width="4.8"/>
<path d="M1350.7 948.3 L1350.7 749.5" stroke="#fff" stroke-width="4.8"/>
<path d="M1368.9 950.1 L1411.8 755.7" stroke="#fff" stroke-width="4.8"/>
<path d="M1386.5 955.5 L1470.6 774.2" stroke="#fff" stroke-width="4.8"/>
<path d="M1402.8 964.3 L1525.0 804.5" stroke="#fff" stroke-width="4.8"/>
<path d="M1417.1 976.4 L1572.1 845.4" stroke="#fff" stroke-width="4.8"/>
<path d="M1328.9 1018.0L1128.9 849.0M1332.8 1013.4L1132.8 844.4M1332.5 1013.7L1175.2 807.9M1337.3 1010.0L1180.0 804.3M1337.0 1010.2L1228.9 777.3M1342.5 1007.7L1234.4 774.7M1342.2 1007.8L1287.1 758.3M1348.0 1006.5L1293.0 757.0M1347.7 1006.5L1347.7 751.5M1353.7 1006.5L1353.7 751.5M1353.4 1006.5L1408.4 757.0M1359.2 1007.8L1414.3 758.3M1358.9 1007.7L1467.0 774.7M1364.4 1010.2L1472.5 777.3M1364.1 1010.0L1521.4 804.3M1368.9 1013.7L1526.2 807.9M1368.6 1013.4L1568.6 844.4M1372.5 1018.0L1572.5 849.0M1350.7 1032.5L1096.4 891.0M1350.7 1032.5L1605.0 891.0M1096.4 891.0A301.5 301.5 0 0 1 1605.0 891.0M1273.6 989.6A92.7 92.7 0 0 1 1427.8 989.6" fill="none" stroke="#4F80FF" stroke-width="2"/>
<path d="M1343.4 1037V1150H1356.7V1037Z" fill="#000" stroke="#4F80FF" stroke-width="1.8"/>
<path d="M1343.6 1036V1022A6.7 10 0 0 1 1357 1022V1036" fill="#000" stroke="#4F80FF" stroke-width="1.8"/>
<ellipse cx="1350.2" cy="1032.5" rx="13.2" ry="5.6" fill="#000" stroke="#4F80FF" stroke-width="1.8"/>
<rect x="1344" y="1025" width="12.5" height="10.5" rx="1.5" fill="#4F80FF"/>
<path d="M1338.5 1166C1337 1156 1340 1146 1343.5 1142H1356.5C1360 1146 1363 1156 1361.5 1166C1361 1172 1357 1172.5 1350 1172.5C1343 1172.5 1339 1172 1338.5 1166Z" fill="#000" stroke="#4F80FF" stroke-width="1.8"/>
<path d="M1343.5 1160V1145A6.5 8 0 0 1 1356.5 1145V1160" fill="#000" stroke="#4F80FF" stroke-width="1.8"/>
<rect x="1344" y="1150" width="12.5" height="10.5" rx="2" fill="#4F80FF"/>
<path d="M1145.7 1367.2H1208.5V1381.1H1162.6V1417.3H1205V1430.8H1162.6V1481.7H1145.7Z" fill="#000" stroke="#222" stroke-width="1"/>
<path d="M1205.6 1481.7L1244.4 1367.2H1263.5L1301 1481.7H1284.3L1272.7 1446H1233.4L1222.4 1481.7ZM1253 1385.1L1236.9 1433H1269.3Z" fill="#000" fill-rule="evenodd" stroke="#222" stroke-width="1"/>
<path d="M1316 1481.7V1367.2H1333.5L1387.3 1452V1367.2H1404V1481.7H1388.5L1331.7 1393V1481.7Z" fill="#000" stroke="#222" stroke-width="1"/>
<rect x="1130" y="1479" width="270" height="2.2" fill="#4F80FF"/>
<rect x="1130.2" y="1476" width="8" height="8" fill="#4F80FF"/></svg>
<!-- /ART -->

<!-- CONTEXT TOOLBAR -->
<div class="a" style="left:1134px;top:1583px;width:436px;height:72px;border-radius:9px;background:#535353;border:2px solid #2b2b2b;box-shadow:0 3px 14px rgba(0,0,0,.25)"></div>
<svg style="left:0;top:0" width="3360" height="2100">
 <rect x="1146" y="1592" width="8" height="53" rx="4" fill="#a8a8a8"/>
 <rect x="1175" y="1592" width="150" height="54" rx="5" fill="none" stroke="#6a6a6a" stroke-width="2"/>
 <rect x="1195" y="1603" width="31" height="31" fill="none" stroke="#c8c8c8" stroke-width="2"/>
 <g fill="#c8c8c8"><rect x="1198" y="1607" width="10" height="10"/><rect x="1213" y="1613" width="10" height="10"/><rect x="1200" y="1621" width="10" height="10"/></g>
 <rect x="1344" y="1601" width="2" height="36" fill="#c8c8c8"/>
 <rect x="1348" y="1605" width="16" height="11" fill="#c8c8c8"/><rect x="1348" y="1621" width="26" height="10" fill="#c8c8c8"/>
 <rect x="1394" y="1601" width="36" height="36" fill="#2e2e2e"/>
 <rect x="1396" y="1603" width="32" height="32" fill="#fff"/><rect x="1398.5" y="1605.5" width="27" height="27" fill="#000"/>
 <g fill="#c8c8c8"><rect x="1448" y="1605" width="32" height="4"/><rect x="1448" y="1613" width="32" height="6"/><rect x="1448" y="1623" width="32" height="8"/></g>
 <g fill="#c8c8c8"><circle cx="1514" cy="1619" r="4"/><circle cx="1526" cy="1619" r="4"/><circle cx="1538" cy="1619" r="4"/></g>
</svg>
<div class="t" style="left:1237px;top:1607px;font-size:26px;font-weight:bold;color:#f0f0f0;transform:scaleX(.9);transform-origin:left">Group</div>


<!-- COLOR PANEL -->
<div class="a" style="left:1394px;top:1116px;width:481px;height:476px;background:#535353;border:2px solid #5f5f5f;box-shadow:4px 8px 24px rgba(0,0,0,.3)"></div>
<svg style="left:0;top:0" width="3360" height="2100">
 <defs>
  <linearGradient id="gr" x1="0" x2="1"><stop offset="0" stop-color="#000"/><stop offset="1" stop-color="#f00"/></linearGradient>
  <linearGradient id="gg" x1="0" x2="1"><stop offset="0" stop-color="#000"/><stop offset="1" stop-color="#0f0"/></linearGradient>
  <linearGradient id="gb" x1="0" x2="1"><stop offset="0" stop-color="#000"/><stop offset="1" stop-color="#00f"/></linearGradient>
  <linearGradient id="ggr" x1="0" x2="1"><stop offset="0" stop-color="#111"/><stop offset="1" stop-color="#eee"/></linearGradient>
  <linearGradient id="hue" x1="0" x2="1">
   <stop offset="0" stop-color="#e8302a"/><stop offset=".17" stop-color="#fafa50"/><stop offset=".33" stop-color="#6ce858"/><stop offset=".5" stop-color="#68f8f0"/><stop offset=".67" stop-color="#1838f0"/><stop offset=".83" stop-color="#e848f0"/><stop offset="1" stop-color="#e82a30"/>
  </linearGradient>
  <linearGradient id="wt" x1="0" y1="0" x2="0" y2="1"><stop offset="0" stop-color="#fff" stop-opacity="1"/><stop offset=".5" stop-color="#fff" stop-opacity="0"/></linearGradient>
  <linearGradient id="bk" x1="0" y1="0" x2="0" y2="1"><stop offset=".45" stop-color="#000" stop-opacity="0"/><stop offset="1" stop-color="#000" stop-opacity="1"/></linearGradient>
 </defs>
 <g fill="#c8c8c8"><rect x="1840" y="1125" width="3.5" height="3.5"/><rect x="1840" y="1131" width="3.5" height="3.5"/><rect x="1840" y="1137" width="3.5" height="3.5"/><rect x="1846" y="1125" width="16" height="2"/><rect x="1846" y="1131.5" width="16" height="2"/><rect x="1846" y="1138" width="16" height="2"/></g>
 <rect x="1406" y="1148" width="60" height="60" fill="#2e2e2e"/>
 <rect x="1408" y="1150" width="56" height="56" fill="#fff"/>
 <rect x="1410.5" y="1152.5" width="51" height="51" fill="#000"/>
 <rect x="1525" y="1149" width="226" height="56" rx="4" fill="none" stroke="#5e5e5e" stroke-width="2"/>
 <rect x="1581" y="1150" width="2" height="54" fill="#5e5e5e"/><rect x="1641" y="1150" width="2" height="54" fill="#5e5e5e"/><rect x="1701" y="1150" width="2" height="54" fill="#5e5e5e"/>
 <rect x="1583.5" y="1150" width="57.5" height="53.5" fill="#2f2f2f"/>
 <rect x="1536" y="1166" width="32" height="22" fill="#c8c8c8"/>
 <g fill="#7a7a7a"><rect x="1538" y="1168" width="8" height="8"/><rect x="1558" y="1168" width="8" height="8"/><rect x="1538" y="1178" width="8" height="8"/><rect x="1548" y="1178" width="8" height="8"/><rect x="1558" y="1178" width="8" height="8"/></g>
 <path d="M1608 1163c-2 3 0 6 2 7-3 0-8-1-13 3-6 5-4 13 4 17 8 4 20 3 27-3 6-5 6-15-1-21-5-4-14-6-19-3z" fill="#fff"/>
 <g fill="#2f2f2f"><circle cx="1602" cy="1181" r="3.6"/><circle cx="1611.5" cy="1184.5" r="3.6"/><circle cx="1620" cy="1182" r="3"/><circle cx="1626" cy="1177" r="2.8"/><circle cx="1624" cy="1170.5" r="2.4"/></g>
 <rect x="1656" y="1164" width="34" height="24" fill="url(#ggr)" stroke="#c8c8c8" stroke-width="2"/>
 <g fill="#c8c8c8"><rect x="1714" y="1162" width="8" height="8"/><rect x="1724" y="1172" width="8" height="8"/><rect x="1714" y="1182" width="8" height="8"/><rect x="1734" y="1182" width="8" height="8"/></g>
 <circle cx="1739" cy="1165" r="7" fill="#4a90e2"/>
 <g>
  <rect x="1536" y="1243" width="226" height="12" fill="#5a5a5a"/><rect x="1538" y="1244.7" width="222" height="7.5" fill="url(#gr)"/>
  <rect x="1536" y="1309" width="226" height="12" fill="#5a5a5a"/><rect x="1538" y="1310.7" width="222" height="7.5" fill="url(#gg)"/>
  <rect x="1536" y="1375" width="226" height="12" fill="#5a5a5a"/><rect x="1538" y="1376.7" width="222" height="7.5" fill="url(#gb)"/>
 </g>
 <g fill="#c8c8c8">
  <path d="M1537 1252l8.5 8v6.5a1.5 1.5 0 0 1-1.5 1.5h-14a1.5 1.5 0 0 1-1.5-1.5v-6.5z"/>
  <path d="M1537 1318l8.5 8v6.5a1.5 1.5 0 0 1-1.5 1.5h-14a1.5 1.5 0 0 1-1.5-1.5v-6.5z"/>
  <path d="M1537 1384l8.5 8v6.5a1.5 1.5 0 0 1-1.5 1.5h-14a1.5 1.5 0 0 1-1.5-1.5v-6.5z"/>
 </g>
 <g fill="#454545" stroke="#5c5c5c" stroke-width="1.5">
  <rect x="1777" y="1229.5" width="70" height="39" rx="4"/><rect x="1777" y="1295.5" width="70" height="39" rx="4"/><rect x="1777" y="1361.5" width="70" height="39" rx="4"/>
  <rect x="1708.5" y="1429.5" width="131" height="39" rx="4"/>
 </g>
 <rect x="1406" y="1434.5" width="81" height="27" fill="#2e2e2e"/>
 <rect x="1408" y="1436.5" width="24.5" height="23" fill="#fff"/><path d="M1408 1459.5l24.5-23" stroke="#e52a1e" stroke-width="3"/>
 <rect x="1434.5" y="1436.5" width="24.5" height="23" fill="#000"/>
 <rect x="1461" y="1436.5" width="24" height="23" fill="#fff"/>
 <g fill="#c8c8c8"><rect x="1685" y="1463" width="2" height="2"/><rect x="1689" y="1463" width="2" height="2"/><rect x="1693" y="1463" width="2" height="2"/></g>
 <rect x="1407" y="1481" width="432" height="98" fill="#2e2e2e"/>
 <rect x="1409" y="1483" width="428" height="94" fill="url(#hue)"/>
 <rect x="1409" y="1483" width="428" height="94" fill="url(#wt)"/>
 <rect x="1409" y="1483" width="428" height="94" fill="url(#bk)"/>
 <g fill="#6e6e6e"><rect x="1866" y="1568" width="2" height="2"/><rect x="1862" y="1572" width="2" height="2"/><rect x="1866" y="1572" width="2" height="2"/><rect x="1858" y="1576" width="2" height="2"/><rect x="1862" y="1576" width="2" height="2"/><rect x="1866" y="1576" width="2" height="2"/><rect x="1854" y="1580" width="2" height="2"/><rect x="1858" y="1580" width="2" height="2"/><rect x="1862" y="1580" width="2" height="2"/><rect x="1866" y="1580" width="2" height="2"/></g>
</svg>
<div class="t" style="left:1502px;top:1239px;font-size:22px;font-weight:bold;color:#c8c8c8;transform:scaleX(.78);transform-origin:left">R</div>
<div class="t" style="left:1501px;top:1305px;font-size:22px;font-weight:bold;color:#c8c8c8;transform:scaleX(.78);transform-origin:left">G</div>
<div class="t" style="left:1502px;top:1371px;font-size:22px;font-weight:bold;color:#c8c8c8;transform:scaleX(.78);transform-origin:left">B</div>
<div class="t" style="left:1787px;top:1236px;font-size:22px;color:#f0f0f0">0</div>
<div class="t" style="left:1787px;top:1302px;font-size:22px;color:#f0f0f0">0</div>
<div class="t" style="left:1787px;top:1368px;font-size:22px;color:#f0f0f0">0</div>
<div class="t" style="left:1684px;top:1441px;font-size:22px;font-weight:bold;color:#c8c8c8">#</div>
<div class="t" style="left:1721px;top:1438px;font-size:22px;color:#f0f0f0">000000</div>

<!-- POPUP -->
<div class="a" style="left:2914px;top:1548px;width:440px;height:370px;border-radius:8px;background:#fff;box-shadow:0 2px 10px rgba(0,0,0,.3)"></div>
<div class="t" style="left:2940px;top:1579px;font-size:31.8px;font-weight:bold;color:#000;line-height:33px">Browse libraries in<br>business storage</div>
<div class="t" style="left:3263px;top:1581px;font-size:26px;color:#000">2 of 2</div>
<div class="t" style="left:2940px;top:1676px;font-size:26px;color:#111;line-height:38px">View all libraries in business<br>storage here, and add them to<br>your Adobe apps.</div>
<div class="a" style="left:3184px;top:1822px;width:144px;height:64px;border-radius:32px;background:#1473E6"></div>
<div class="t" style="left:3184px;top:1840px;width:144px;text-align:center;font-size:25px;font-weight:bold;color:#fff">Done</div>

<!-- DOCK -->
<svg style="left:0;top:0" width="3360" height="2100"><defs>
<linearGradient id="dFin" x1="0" y1="0" x2="0" y2="1"><stop offset="0" stop-color="#5ec8fa"/><stop offset="1" stop-color="#1a6ff0"/></linearGradient>
<radialGradient id="dSiri" cx=".5" cy=".5" r=".5"><stop offset="0" stop-color="#fff"/><stop offset=".5" stop-color="#e0f4ff" stop-opacity=".8"/><stop offset="1" stop-color="#9fd8f0" stop-opacity="0"/></radialGradient>
<linearGradient id="dMail" x1="0" y1="0" x2="0" y2="1"><stop offset="0" stop-color="#2a7ef0"/><stop offset="1" stop-color="#5ac8fa"/></linearGradient>
<linearGradient id="dGreen" x1="0" y1="0" x2="0" y2="1"><stop offset="0" stop-color="#7ae06a"/><stop offset="1" stop-color="#34b83a"/></linearGradient>
<linearGradient id="dKey" x1="0" y1="0" x2="0" y2="1"><stop offset="0" stop-color="#3aa0f8"/><stop offset="1" stop-color="#1a60e0"/></linearGradient>
<linearGradient id="dMus" x1="0" y1="0" x2="0" y2="1"><stop offset="0" stop-color="#fa5a6a"/><stop offset="1" stop-color="#e0283a"/></linearGradient>
<linearGradient id="dPod" x1="0" y1="0" x2="0" y2="1"><stop offset="0" stop-color="#c26af0"/><stop offset="1" stop-color="#7a2ac8"/></linearGradient>
<linearGradient id="dApp" x1="0" y1="0" x2="0" y2="1"><stop offset="0" stop-color="#2aa8f8"/><stop offset="1" stop-color="#1a64e0"/></linearGradient>
<linearGradient id="dSet" x1="0" y1="0" x2="0" y2="1"><stop offset="0" stop-color="#b8b8b8"/><stop offset="1" stop-color="#7a7a7a"/></linearGradient>
<linearGradient id="dTrash" x1="0" y1="0" x2="0" y2="1"><stop offset="0" stop-color="#f0f0f0"/><stop offset="1" stop-color="#c8c8c8"/></linearGradient>
<linearGradient id="dSiriBg" x1="0" y1="0" x2="1" y2="1"><stop offset="0" stop-color="#5a1a4a"/><stop offset="1" stop-color="#0a2a3a"/></linearGradient>
<linearGradient id="dSiriOrb" x1="0" y1="0" x2="1" y2="0"><stop offset="0" stop-color="#c8306a"/><stop offset=".5" stop-color="#8a4aa0"/><stop offset="1" stop-color="#2a9ac8"/></linearGradient>
</defs>
<linearGradient id="dockbg" x1="0" x2="1"><stop offset="0" stop-color="#5f5e56"/><stop offset=".5" stop-color="#67655a"/><stop offset=".8" stop-color="#6a6f5c"/><stop offset="1" stop-color="#6c7860"/></linearGradient>
<rect x="592.5" y="2003" width="2175" height="86" rx="22" fill="url(#dockbg)" stroke="#85857a" stroke-width="1.5"/>
<rect x="606.4" y="2016.5" width="53" height="53" rx="12" fill="url(#dFin)"/>

<path d="M634.4 2016.5H647.4A12 12 0 0 1 659.4 2028.5V2057.5A12 12 0 0 1 647.4 2069.5H634.4C630.4 2061.5 629.4 2054.5 631.4 2046.5H626.4C628.4 2034.5 631.4 2024.5 634.4 2016.5Z" fill="#eef2f6"/>
<rect x="620.4" y="2031.5" width="3" height="8" rx="1.5" fill="#1a2a3a"/><rect x="642.4" y="2031.5" width="3" height="8" rx="1.5" fill="#1a2a3a"/>
<path d="M615.4 2053.5q16 10 36 0" fill="none" stroke="#1a2a3a" stroke-width="2.5" stroke-linecap="round"/>
<rect x="676.4" y="2016.5" width="53" height="53" rx="12" fill="url(#dSiriBg)"/>
<circle cx="702.9" cy="2043.0" r="21" fill="url(#dSiriOrb)"/><circle cx="702.9" cy="2043.0" r="21" fill="none" stroke="#6a5a8a" stroke-width="1.2"/><circle cx="704.9" cy="2041.5" r="9" fill="url(#dSiri)"/>
<rect x="746.5" y="2016.5" width="53" height="53" rx="12" fill="#d8d8d8"/>
<rect x="755.5" y="2025.5" width="10" height="10" rx="2.5" fill="#5ad050"/>
<rect x="768.5" y="2025.5" width="10" height="10" rx="2.5" fill="#f8c030"/>
<rect x="781.5" y="2025.5" width="10" height="10" rx="2.5" fill="#f89030"/>
<rect x="755.5" y="2038.5" width="10" height="10" rx="2.5" fill="#e03a30"/>
<rect x="768.5" y="2038.5" width="10" height="10" rx="2.5" fill="#c8c8c8"/>
<rect x="781.5" y="2038.5" width="10" height="10" rx="2.5" fill="#f85a6a"/>
<rect x="755.5" y="2051.5" width="10" height="10" rx="2.5" fill="#9a4ae0"/>
<rect x="768.5" y="2051.5" width="10" height="10" rx="2.5" fill="#3a9af8"/>
<rect x="781.5" y="2051.5" width="10" height="10" rx="2.5" fill="#5ad0a0"/>
<rect x="816.5" y="2016.5" width="53" height="53" rx="12" fill="#f4f4f4"/>
<circle cx="843.0" cy="2043.0" r="20" fill="#2a8af0"/><path d="M857.0 2028.5L846.0 2045.5L840.0 2040.5Z" fill="#f03a30"/><path d="M829.0 2057.5L846.0 2045.5L840.0 2040.5Z" fill="#fff"/>
<rect x="886.6" y="2016.5" width="53" height="53" rx="12" fill="url(#dMail)"/>
<rect x="894.6" y="2030.5" width="37" height="26" rx="2" fill="#f4f4f4"/><path d="M894.6 2031.5l18.5 14 18.5-14" fill="none" stroke="#bbb" stroke-width="1.5"/>
<rect x="956.6" y="2016.5" width="53" height="53" rx="12" fill="#b48c52"/>
<rect x="1006.6" y="2025.5" width="4" height="36" fill="#6ab0e0"/><circle cx="981.1" cy="2042.5" r="16" fill="none" stroke="#8a6a3a" stroke-width="1.5"/><circle cx="981.1" cy="2038.5" r="6" fill="#9a7442"/><path d="M970.1 2055.5a12 9 0 0 1 22 0" fill="#9a7442"/>
<rect x="1026.7" y="2016.5" width="53" height="53" rx="12" fill="#fafafa"/>
<path d="M1038.7 2016.5h29a12 12 0 0 1 12 12v3h-53v-3a12 12 0 0 1 12-12z" fill="#e8483a"/>
<text x="1053.2" y="2028.5" font-family="Liberation Sans" font-weight="bold" font-size="11" fill="#fff" text-anchor="middle">OCT</text>
<text x="1053.2" y="2062.5" font-family="Liberation Sans" font-size="29" fill="#222" text-anchor="middle">31</text>
<rect x="1096.8" y="2016.5" width="53" height="53" rx="12" fill="#fafafa"/>
<circle cx="1107.8" cy="2029.5" r="3.5" fill="none" stroke="#2a7af0" stroke-width="1.8"/><circle cx="1107.8" cy="2029.5" r="2" fill="#2a7af0"/><rect x="1115.8" y="2029.5" width="24" height="1.2" fill="#bbb"/>
<circle cx="1107.8" cy="2043.0" r="3.5" fill="none" stroke="#e83a30" stroke-width="1.8"/><circle cx="1107.8" cy="2043.0" r="2" fill="#e83a30"/><rect x="1115.8" y="2043.0" width="24" height="1.2" fill="#bbb"/>
<circle cx="1107.8" cy="2056.5" r="3.5" fill="none" stroke="#f89a20" stroke-width="1.8"/><circle cx="1107.8" cy="2056.5" r="2" fill="#f89a20"/><rect x="1115.8" y="2056.5" width="24" height="1.2" fill="#bbb"/>
<rect x="1166.8" y="2016.5" width="53" height="53" rx="12" fill="#f8d030"/>
<circle cx="1182.8" cy="2038.5" r="3.5" fill="#fff"/><circle cx="1203.8" cy="2038.5" r="3.5" fill="#fff"/><circle cx="1182.8" cy="2038.5" r="1.6" fill="#222"/><circle cx="1203.8" cy="2038.5" r="1.6" fill="#222"/><path d="M1181.8 2052.5c6-5 16-5 22 0-3 6-19 6-22 0z" fill="#f06a20"/>
<rect x="1236.8" y="2016.5" width="53" height="53" rx="12" fill="#8adc7a"/>
<path d="M1256.8 2016.5h10v53h-10z" fill="#3a8af0"/><path d="M1236.8 2028.5l53 26v11l-53-25z" fill="#f4f4e8"/><circle cx="1262.3" cy="2049.5" r="8" fill="#3a8af0" stroke="#fff" stroke-width="2"/><path d="M1262.3 2044.5l5 9-5-2-5 2z" fill="#fff"/>
<rect x="1306.9" y="2016.5" width="53" height="53" rx="12" fill="#fafafa"/>
<ellipse cx="1333.4" cy="2034.0" rx="7" ry="11" fill="#f8b020" fill-opacity=".85" transform="rotate(0 1333.4 2043.0)"/>
<ellipse cx="1333.4" cy="2034.0" rx="7" ry="11" fill="#f8e040" fill-opacity=".85" transform="rotate(45 1333.4 2043.0)"/>
<ellipse cx="1333.4" cy="2034.0" rx="7" ry="11" fill="#8ad050" fill-opacity=".85" transform="rotate(90 1333.4 2043.0)"/>
<ellipse cx="1333.4" cy="2034.0" rx="7" ry="11" fill="#3ab0a0" fill-opacity=".85" transform="rotate(135 1333.4 2043.0)"/>
<ellipse cx="1333.4" cy="2034.0" rx="7" ry="11" fill="#3a8af0" fill-opacity=".85" transform="rotate(180 1333.4 2043.0)"/>
<ellipse cx="1333.4" cy="2034.0" rx="7" ry="11" fill="#9a5ae0" fill-opacity=".85" transform="rotate(225 1333.4 2043.0)"/>
<ellipse cx="1333.4" cy="2034.0" rx="7" ry="11" fill="#e84a8a" fill-opacity=".85" transform="rotate(270 1333.4 2043.0)"/>
<ellipse cx="1333.4" cy="2034.0" rx="7" ry="11" fill="#f06030" fill-opacity=".85" transform="rotate(315 1333.4 2043.0)"/>
<rect x="1376.9" y="2016.5" width="53" height="53" rx="12" fill="url(#dGreen)"/>
<ellipse cx="1403.4" cy="2041.5" rx="19" ry="15" fill="#fff"/><path d="M1391.9 2052.5l-4 8 9-5z" fill="#fff"/>
<rect x="1447.0" y="2016.5" width="53" height="53" rx="12" fill="url(#dGreen)"/>
<rect x="1456.0" y="2032.0" width="26" height="22" rx="5" fill="#fff"/><path d="M1482.0 2039.5l10-7v22l-10-7z" fill="#fff"/>
<rect x="1517.0" y="2016.5" width="53" height="53" rx="12" fill="url(#dGreen)"/>
<g fill="#fff"><rect x="1526.0" y="2052.5" width="5.5" height="10" rx="1"/><rect x="1535.5" y="2044.5" width="5.5" height="18" rx="1"/><rect x="1545.0" y="2026.5" width="5.5" height="36" rx="1"/><rect x="1554.5" y="2036.5" width="5.5" height="26" rx="1"/></g>
<rect x="1587.1" y="2016.5" width="53" height="53" rx="12" fill="#fbf6ea"/>
<text x="1593.1" y="2040.5" font-family="Liberation Serif" font-weight="bold" font-size="22" fill="#f0a030">&#8220;</text><path d="M1606.1 2060.5l22-30 3 2-20 31z" fill="#f0a020"/><path d="M1604.1 2061.5l3 2-3 6z" fill="#222"/>
<rect x="1657.2" y="2016.5" width="53" height="53" rx="12" fill="url(#dKey)"/>
<path d="M1668.7 2025.5h30l-3 16h-24z" fill="#fff"/><circle cx="1683.7" cy="2032.5" r="4" fill="#f0a030"/><rect x="1682.7" y="2041.5" width="2" height="18" fill="#fff"/><rect x="1675.7" y="2059.5" width="16" height="2" fill="#fff"/>
<rect x="1727.2" y="2016.5" width="53" height="53" rx="12" fill="url(#dMus)"/>
<path d="M1745.2 2029.5l18-4v25a5 4.5 0 1 1-3-4v-15l-12 3v19a5 4.5 0 1 1-3-4z" fill="#fff"/>
<rect x="1797.2" y="2016.5" width="53" height="53" rx="12" fill="url(#dPod)"/>
<circle cx="1823.8" cy="2040.5" r="16" fill="none" stroke="#fff" stroke-width="3"/><circle cx="1823.8" cy="2040.5" r="9" fill="none" stroke="#fff" stroke-width="3"/><circle cx="1823.8" cy="2039.5" r="4.5" fill="#fff"/><rect x="1820.2" y="2045.5" width="7" height="18" rx="3.5" fill="#fff"/>
<rect x="1867.3" y="2016.5" width="53" height="53" rx="12" fill="#1a1e1e"/>
<text x="1890.8" y="2049.5" font-family="Liberation Sans" font-weight="bold" font-size="19" fill="#fff">tv</text>
<path d="M1880.8 2036.0c-3 0-5 2.5-5 6s2.5 7 4.5 7c1 0 1.5-.6 2.5-.6s1.5.6 2.5.6c2 0 4.5-4 4.5-6-2-1-2.5-4-.5-5.5-1-1.5-2.5-1.8-3.5-1.8-1.2 0-2 .6-2.7.6s-1.3-.6-2.3-.6zM1882.8 2035.5c1.5 0 2.8-1.5 2.6-3-1.5.1-2.8 1.5-2.6 3z" fill="#fff"/>
<rect x="1937.3" y="2016.5" width="53" height="53" rx="12" fill="url(#dApp)"/>
<path d="M1952.8 2056.5l11-19M1958.8 2028.5l11 19M1950.8 2049.5h24" stroke="#fff" stroke-width="3.5" stroke-linecap="round" fill="none"/>
<path d="M1974.8 2056.5l-8-14M1971.8 2049.5l6 0" stroke="#fff" stroke-width="3.5" stroke-linecap="round"/>
<rect x="2007.4" y="2016.5" width="53" height="53" rx="12" fill="url(#dSet)"/>
<circle cx="2033.9" cy="2043.0" r="20" fill="none" stroke="#3a3a3a" stroke-width="3.5" stroke-dasharray="3 2.2"/><circle cx="2033.9" cy="2043.0" r="16.5" fill="#8a8a8a" stroke="#3a3a3a" stroke-width="2"/><circle cx="2033.9" cy="2043.0" r="10" fill="none" stroke="#3a3a3a" stroke-width="2.5"/><path d="M2033.9 2043.0v-10M2033.9 2043.0l8.7 5M2033.9 2043.0l-8.7 5" stroke="#3a3a3a" stroke-width="2.5"/><circle cx="2033.9" cy="2043.0" r="3" fill="#3a3a3a"/>
<rect x="2077.4" y="2016.5" width="53" height="53" rx="12" fill="#fafafa"/>
<circle cx="2094.4" cy="2050.5" r="13" fill="#f06a4a"/><rect x="2095.4" y="2022.5" width="28" height="28" rx="5" fill="#3ac0f0"/><path d="M2087.4 2048.5c4-12 8-12 8 0s6-10 8-2 4-4 8-2" fill="none" stroke="#1a3aa0" stroke-width="2.5"/>
<rect x="2154.5" y="2014" width="2" height="63" fill="#3a3a30"/><rect x="2535.6" y="2014" width="2" height="63" fill="#3a3a30"/>
<rect x="2178.3" y="2016.5" width="53" height="53" rx="12" fill="#f4f4f4"/>
<circle cx="2204.8" cy="2043.0" r="22" fill="#3aa850"/><path d="M2185.8 2032.0a22 22 0 0 1 38.1 11H2204.8z" fill="#ea4335"/><path d="M2223.8 2032.0a22 22 0 0 1 -19 33l10-19z" fill="#fbbc04"/><circle cx="2204.8" cy="2043.0" r="10" fill="#fff"/><circle cx="2204.8" cy="2043.0" r="7.5" fill="#3a80f0"/>
<rect x="2248.3" y="2016.5" width="53" height="53" rx="12" fill="#e8e8e8"/><rect x="2253.3" y="2021.5" width="43" height="40" rx="3" fill="#8ab0e8"/><rect x="2253.3" y="2047.5" width="43" height="14" fill="#3a5a7a"/><path d="M2278.3 2051.5h18l2 18h-22z" fill="#ddd" stroke="#222" stroke-width="2"/><rect x="2278.3" y="2045.5" width="18" height="7" rx="2" fill="#111"/>
<rect x="2318.3" y="2016.5" width="53" height="53" rx="12" fill="#fafafa"/>
<rect x="2322.3" y="2024.5" width="45" height="1" fill="#9ab0c8"/>
<rect x="2322.3" y="2031.0" width="45" height="1" fill="#9ab0c8"/>
<rect x="2322.3" y="2037.5" width="45" height="1" fill="#9ab0c8"/>
<rect x="2322.3" y="2044.0" width="45" height="1" fill="#9ab0c8"/>
<rect x="2322.3" y="2050.5" width="45" height="1" fill="#9ab0c8"/>
<rect x="2322.3" y="2057.0" width="45" height="1" fill="#9ab0c8"/>
<rect x="2322.3" y="2063.5" width="45" height="1" fill="#9ab0c8"/>
<rect x="2328.3" y="2016.5" width="1" height="53" fill="#e05a5a"/><path d="M2338.3 2069.5l20-48 3 1-19 48z" fill="#b0b8c8" stroke="#666" stroke-width="1"/>
<rect x="2388.3" y="2016.5" width="53" height="53" rx="12" fill="#f2ecdc"/><path d="M2400.3 2016.5h29a12 12 0 0 1 12 12v3h-53v-3a12 12 0 0 1 12-12z" fill="#f8cc40"/><rect x="2388.3" y="2047.5" width="53" height="1" fill="#c8c0a8"/><rect x="2388.3" y="2060.5" width="53" height="1" fill="#c8c0a8"/>
<rect x="2458.0" y="2016.5" width="54" height="53" rx="12" fill="#330000"/><text x="2485.0" y="2052.5" font-family="Liberation Sans" font-weight="bold" font-size="27" fill="#ff9a00" text-anchor="middle">Ai</text>
<rect x="2555.7" y="2028" width="62" height="30" fill="#f8f8f8"/><rect x="2555.7" y="2028" width="11" height="30" fill="#e0e0e0"/><rect x="2577.7" y="2030" width="4" height="5" fill="#8ab0e0"/><rect x="2596.7" y="2053" width="19" height="20" rx="4" fill="url(#dFin)"/><rect x="2606.7" y="2053" width="9" height="20" fill="#eaf0f6"/>
<rect x="2625.6" y="2028" width="62" height="30" fill="#f8f8f8"/><rect x="2625.6" y="2028" width="11" height="30" fill="#e0e0e0"/><rect x="2647.6" y="2030" width="4" height="5" fill="#8ab0e0"/><rect x="2666.6" y="2053" width="19" height="20" rx="4" fill="url(#dFin)"/><rect x="2676.6" y="2053" width="9" height="20" fill="#eaf0f6"/>
<path d="M2704 2019h47l-5 52h-37z" fill="url(#dTrash)" fill-opacity=".9"/><ellipse cx="2727.5" cy="2019" rx="23.5" ry="5" fill="#ccc" stroke="#999" stroke-width="1"/><path d="M2712 2018l6-5 7 4 6-5 8 3 6 2" fill="none" stroke="#555" stroke-width="3"/>
<circle cx="1074.0" cy="2022.3" r="11.5" fill="#e8443a"/><text x="1074.0" y="2030" font-family="Liberation Sans" font-size="16" fill="#fff" text-anchor="middle">1</text>
<circle cx="1984.3" cy="2022.3" r="11.5" fill="#e8443a"/><text x="1984.3" y="2030" font-family="Liberation Sans" font-size="16" fill="#fff" text-anchor="middle">4</text>
<circle cx="2053.9" cy="2022.3" r="11.5" fill="#e8443a"/><text x="2053.9" y="2030" font-family="Liberation Sans" font-size="16" fill="#fff" text-anchor="middle">1</text>
<circle cx="632.2" cy="2082" r="4" fill="#111"/>
<circle cx="842.0" cy="2082" r="4" fill="#111"/>
<circle cx="2204.0" cy="2082" r="4" fill="#111"/>
<circle cx="2273.5" cy="2082" r="4" fill="#111"/>
<circle cx="2343.4" cy="2082" r="4" fill="#111"/>
<circle cx="2414.0" cy="2082" r="4" fill="#111"/>
<circle cx="2484.0" cy="2082" r="4" fill="#111"/></svg>
<div class="t" style="left:3008px;top:2009px;font-size:25px;font-weight:bold;color:#d4d4d4">Visual Studio Code</div>
<!-- /DOCK -->
</body></html>
